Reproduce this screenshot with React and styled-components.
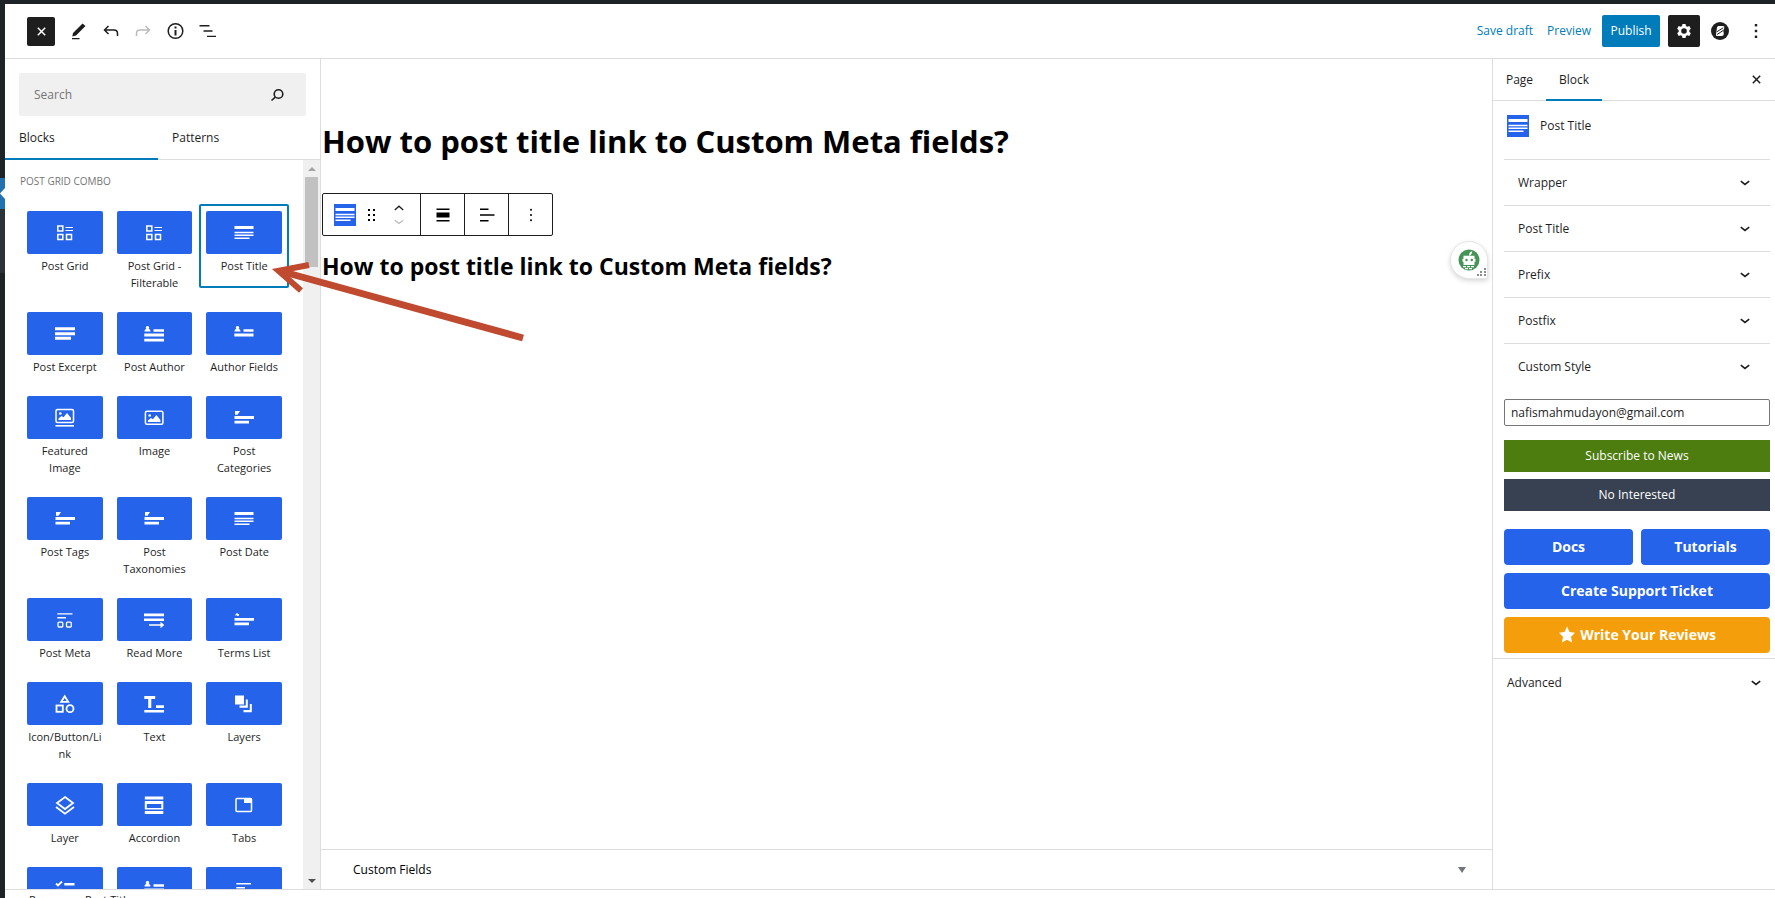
import React from "react";
import styled, { createGlobalStyle, css } from "styled-components";

const BLUE = "#2563eb";
const LINK = "#007cba";
const INK = "#1e1e1e";
const LINE = "#dddddd";

const GlobalStyle = createGlobalStyle`
  *, *::before, *::after { box-sizing: border-box; }
  body {
    margin: 0;
    background: #fff;
    color: ${INK};
    font: 12px/16px "Open Sans", "Noto Sans", sans-serif;
  }
  button, input { font: inherit; color: inherit; margin: 0; }
  button { border: 0; padding: 0; background: none; cursor: pointer; }
  svg { display: block; flex: none; }
`;

/* ---------- page frame ---------- */

const Page = styled.div`
  position: relative;
  display: grid;
  grid-template-columns: 5px minmax(0, 1fr);
  height: 100vh;
  overflow: hidden;
  border-top: 4px solid #1d2327;
`;

const AdminMenu = styled.nav`
  display: flex;
  flex-direction: column;
  padding-top: 174px;
  background: #1d2327;
`;

const AdminCurrent = styled.div`
  height: 31px;
  background: #2271b1;
  overflow: hidden;
`;

const AdminSubmenu = styled.div`
  height: 64px;
  background: #2c3338;
`;

const Editor = styled.div`
  display: flex;
  flex-direction: column;
  min-width: 0;
  min-height: 0;
`;

const Header = styled.header`
  display: flex;
  align-items: center;
  justify-content: space-between;
  flex: none;
  height: 55px;
  padding: 0 3px 0 20px;
  border-bottom: 1px solid ${LINE};
`;

const Tools = styled.div`
  display: flex;
  align-items: center;
`;

const ToolButton = styled.button`
  display: grid;
  place-items: center;
  width: 32px;
  height: 32px;
  color: ${(p) => (p.$muted ? "#bbbbbb" : INK)};
`;

const CloseInserter = styled(ToolButton)`
  width: 28px;
  height: 29px;
  margin: 0 8px 0 2px;
  border-radius: 2px;
  background: ${INK};
  color: #fff;
`;

const MoreButton = styled(ToolButton)`
  margin-left: 4px;
`;

const TextButton = styled.button`
  padding: 0 7px;
  height: 32px;
  color: ${LINK};
`;

const PublishButton = styled.button`
  height: 32px;
  width: 58px;
  margin: 0 8px 0 4px;
  border-radius: 2px;
  background: ${LINK};
  color: #fff;
`;

const SettingsButton = styled(ToolButton)`
  margin-right: 4px;
  border-radius: 2px;
  background: ${INK};
  color: #fff;
`;

const Body = styled.div`
  display: grid;
  grid-template-columns: 316px minmax(0, 1fr) 283px;
  flex: 1;
  min-height: 0;
`;

const Footer = styled.footer`
  display: flex;
  align-items: flex-start;
  gap: 10px;
  flex: none;
  height: 9px;
  padding: 3px 24px 0;
  border-top: 1px solid ${LINE};
  font-size: 11px;
  line-height: 14px;
`;

/* ---------- inserter ---------- */

const Inserter = styled.aside`
  display: flex;
  flex-direction: column;
  min-height: 0;
  border-right: 1px solid ${LINE};
`;

const SearchBox = styled.label`
  display: flex;
  align-items: center;
  height: 43px;
  margin: 14px 14px 0;
  padding: 1px 21px 0 15px;
  border-radius: 2px;
  background: #f0f0f0;
`;

const SearchInput = styled.input`
  flex: 1;
  min-width: 0;
  border: 0;
  outline: 0;
  background: none;
  padding: 0;
  &::placeholder { color: #757575; opacity: 1; }
`;

const Tabs = styled.div`
  display: flex;
  flex: none;
  height: 44px;
  border-bottom: 1px solid ${LINE};
`;

const InserterTab = styled.button`
  width: 153px;
  height: 44px;
  padding: 0 14px;
  text-align: left;
  ${(p) => p.$active && css`box-shadow: inset 0 -2px ${LINK};`}
`;

const ScrollArea = styled.div`
  display: flex;
  flex: 1;
  min-height: 0;
`;

const BlockList = styled.div`
  flex: 1;
  min-width: 0;
  padding: 13px 14px 0 15px;
  overflow: hidden;
`;

const GroupTitle = styled.h2`
  margin: 0 0 15px;
  font-size: 10px;
  font-weight: 500;
  line-height: 16px;
  color: #757575;
  text-transform: uppercase;
`;

const BlockGrid = styled.div`
  display: grid;
  grid-template-columns: repeat(3, minmax(0, 1fr));
  align-items: start;
`;

const BlockItem = styled.button`
  display: block;
  padding: 7px 7px 14px;
  border-radius: 2px;
  font-size: 11px;
  line-height: 17px;
  text-align: center;
  overflow-wrap: anywhere;
  ${(p) => p.$selected && css`box-shadow: inset 0 0 0 2px ${LINK};`}
`;

const BlockTile = styled.span`
  display: grid;
  place-items: center;
  height: 43px;
  margin-bottom: 3px;
  border-radius: 2px;
  background: ${BLUE};
  color: #fff;
`;

const ScrollTrack = styled.div`
  display: flex;
  flex-direction: column;
  align-items: center;
  width: 17px;
  padding: 7px 0 6px;
  background: #f0f0f0;
`;

const ScrollThumb = styled.div`
  width: 13px;
  height: 90px;
  margin: 6px 0 auto;
  background: #c1c1c1;
`;

/* ---------- canvas ---------- */

const Canvas = styled.main`
  display: flex;
  flex-direction: column;
  min-width: 0;
  color: #000;
`;

const Content = styled.div`
  flex: 1;
  padding: 62px 1px 0;
`;

const PostHeading = styled.h1`
  margin: 0 0 31px;
  font-size: 31px;
  line-height: 41px;
  font-weight: 700;
`;

const BlockToolbar = styled.div`
  display: inline-flex;
  height: 43px;
  border: 1px solid ${INK};
  border-radius: 2px;
`;

const ToolbarGroup = styled.div`
  display: flex;
  align-items: center;
  justify-content: center;
  width: 44px;
  & + & { border-left: 1px solid ${INK}; }
`;

const MoverGroup = styled(ToolbarGroup)`
  justify-content: flex-start;
  gap: 8px;
  width: 97px;
  padding-left: 11px;
`;

const BlockIcon = styled.span`
  display: grid;
  place-items: center;
  width: 22px;
  height: 22px;
  background: ${BLUE};
  color: #fff;
`;

const Movers = styled.div`
  display: flex;
  flex-direction: column;
  gap: 8px;
  margin-left: 6px;
`;

const BlockHeading = styled.h2`
  margin: 14px 0 0;
  font-size: 23px;
  line-height: 32px;
  font-weight: 700;
`;

const MetaBox = styled.button`
  display: flex;
  align-items: center;
  justify-content: space-between;
  height: 40px;
  padding: 0 26px 0 32px;
  border-top: 1px solid ${LINE};
  font-size: 12px;
`;

const Assistant = styled.button`
  position: absolute;
  top: 237px;
  right: 287px;
  display: grid;
  place-items: center;
  width: 38px;
  height: 38px;
  border: 1px solid #e6e6e8;
  border-radius: 19px 19px 2px 19px;
  background: #fff;
  box-shadow: 0 2px 5px rgba(0, 0, 0, 0.16);
`;

const PointerArrow = styled.svg`
  position: absolute;
  top: 250px;
  left: 268px;
  pointer-events: none;
`;

/* ---------- settings sidebar ---------- */

const Settings = styled.aside`
  border-left: 1px solid ${LINE};
`;

const SettingsTabs = styled.div`
  display: flex;
  align-items: stretch;
  height: 42px;
  padding-right: 3px;
  border-bottom: 1px solid ${LINE};
`;

const SettingsTab = styled.button`
  width: ${(p) => (p.$active ? 56 : 53)}px;
  height: 42px;
  ${(p) => p.$active && css`box-shadow: inset 0 -2px ${LINK};`}
`;

const CloseSettings = styled(ToolButton)`
  align-self: center;
  margin-left: auto;
`;

const BlockCard = styled.div`
  display: flex;
  align-items: center;
  gap: 11px;
  height: 50px;
  padding: 0 14px;
`;

const Panels = styled.div`
  display: flex;
  flex-direction: column;
  padding: 8px 5px 5px 11px;
`;

const PanelRow = styled.button`
  display: flex;
  align-items: center;
  justify-content: space-between;
  width: 100%;
  height: ${(p) => (p.$flush ? 48 : 46)}px;
  padding: ${(p) => (p.$flush ? "0 14px" : "1px 20px 0 14px")};
  border-top: 1px solid ${LINE};
`;

const EmailInput = styled.input`
  width: 100%;
  height: 27px;
  margin: 10px 0 14px;
  padding: 0 6px;
  border: 1px solid #767676;
  border-radius: 2px;
  background: #fff;
`;

const FlatButton = styled.button`
  height: 32px;
  margin-bottom: 7px;
  background: ${(p) => p.$bg};
  color: #fff;
`;

const Actions = styled.div`
  display: grid;
  grid-template-columns: 1fr 1fr;
  gap: 8px;
  margin-top: 11px;
`;

const ActionLink = styled.a`
  display: flex;
  align-items: center;
  justify-content: center;
  gap: 4px;
  grid-column: ${(p) => (p.$full ? "1 / -1" : "auto")};
  height: 36px;
  border-radius: 4px;
  background: ${(p) => (p.$warm ? "#f59e0b" : BLUE)};
  color: #fff;
  font-size: 14px;
  font-weight: 700;
  text-decoration: none;
`;

/* ---------- drawings ---------- */

const Glyph = ({ size = 20, box = 20, children }) => (
  <svg width={size} height={size} viewBox={`0 0 ${box} ${box}`} fill="currentColor" aria-hidden="true">
    {children}
  </svg>
);

const stroke = (w) => ({ fill: "none", stroke: "currentColor", strokeWidth: w });

const Person = () => <path d="M3.5 2a1.7 1.7 0 0 1 1 3.1c1.3.3 2 1 2 2.4h-6c0-1.4.7-2.1 2-2.4A1.7 1.7 0 0 1 3.5 2z" />;
const Picture = () => (
  <>
    <circle cx="5.3" cy="5.5" r="1.3" />
    <path d="M3.5 12v-1.5l3-2.5 2 1.2L12 5l4 5v2z" />
  </>
);

const glyphs = {
  grid: (
    <>
      <g {...stroke(1.5)}>
        <rect x="2.8" y="3" width="5" height="5" />
        <rect x="2.8" y="11.5" width="5" height="5" />
        <rect x="11.5" y="11.5" width="5" height="5" />
      </g>
      <path d="M10.500 4h7.500v1.100h-7.500zM10.500 7h7.500v1.100h-7.500z" />
    </>
  ),
  title: <path d="M.5 3h19v3H.5zM.5 8.800h19v1.400H.5zM.5 11.500h19v1.400H.5zM.5 14.500h15v1.400H.5z" />,
  excerpt: <path d="M0 3.200h20v3H0zM0 8.200h20v3H0zM0 12.800h16v3H0z" />,
  author: (
    <>
      <Person />
      <path d="M9.500 5.200H20v2.500H9.500zM.3 9.500H20v3H.3zM.3 14.700H20v2.700H.3z" />
    </>
  ),
  fields: (
    <>
      <Person />
      <path d="M9.500 5.200h10v2.500h-10zM.3 9.500h19.200v3H.3z" />
    </>
  ),
  featured: (
    <>
      <rect x="1" y="1.500" width="17.500" height="13" rx="1.500" {...stroke(1.5)} />
      <Picture />
      <path d="M.5 17H19v1.600H.5z" />
    </>
  ),
  image: (
    <g transform="translate(.4 2)">
      <rect x="1" y="1.200" width="17.500" height="13" rx="1.500" {...stroke(1.5)} />
      <Picture />
    </g>
  ),
  tag: (
    <>
      <path d="M1 3h5L3.500 6.800H1z" />
      <path d="M.5 8H20v3H.5zM.5 12.700H15v2.800H.5z" />
    </>
  ),
  terms: (
    <>
      <path d="M2.800 3l2.500 1.500L4.500 6H3v-.8L.8 5.500z" />
      <path d="M.5 8H20v2.800H.5zM.5 12.500H15v2.800H.5z" />
    </>
  ),
  meta: (
    <>
      <path d="M2.300 3.200h15.200v1.300H2.300zM2.300 7H11v1.400H2.300z" />
      <rect x="3" y="12.200" width="4.800" height="4.800" rx="1" {...stroke(1.3)} />
      <rect x="11.500" y="12.200" width="4.800" height="4.800" rx="1" {...stroke(1.3)} />
    </>
  ),
  more: <path d="M0 3.500h20v2.700H0zM0 8.400h20v2.700H0zM5 14.200h11.500v-2.400l3.700 3.200-3.700 3.200v-2.400H5z" />,
  shapes: (
    <g {...stroke(1.8)}>
      <path d="M9.700 2.200l3.500 5.600H6.200z" />
      <rect x="1.500" y="11.500" width="6.300" height="6.300" />
      <circle cx="15" cy="14.700" r="3.500" />
    </g>
  ),
  text: <path d="M.3 2h10.900v3H7.300v9H4.200V5H.3zM12 11.300h8V14h-8zM.3 16H20v2.600H.3z" />,
  layers: <path d="M1 1.500h9v9H1zM11.800 5.500h2v8.300H5.500v-2.300h6.300zM15.800 10h2v8.300H9.500V16h6.300z" />,
  layer: <path d="M10 2l8 6-8 6-8-6zM1 12l9 6.700 9-6.700" {...stroke(1.8)} />,
  accordion: (
    <>
      <path d="M.8 1.500h18.500v3H.8zM.8 16h18.500v3H.8z" />
      <path d="M.8 6h18.500v8.500H.8zm2 3v4h14.500V9z" fillRule="evenodd" />
    </>
  ),
  tabs: (
    <>
      <rect x="2" y="3.500" width="15.500" height="13" rx="1" {...stroke(1.5)} />
      <path d="M10 3h8v5h-8z" />
    </>
  ),
  checks: (
    <>
      <path d="M1 4.500l2 2 4-4" {...stroke(1.8)} />
      <path d="M9.300 4h10.200v2.500H9.300zM9.300 12h10.200v2.500H9.300z" />
      <rect x="2.200" y="10.500" width="4" height="4" {...stroke(1.3)} />
    </>
  ),
  lines: <path d="M2.300 4H17v1.400H2.300zM2.300 8H11v1.400H2.300zM2.300 12H17v1.400H2.300z" />,
};

const Chevron = ({ up, color = INK, thin }) => (
  <svg width="10" height="6" viewBox="0 0 10 6" aria-hidden="true">
    <path
      d={up ? "M.8 5L5 1.200 9.200 5" : "M.8 1.200L5 4.500 9.200 1.200"}
      fill="none"
      stroke={color}
      strokeWidth={thin ? 1.3 : 1.6}
    />
  </svg>
);

const Cross = () => (
  <svg width="9" height="9" viewBox="0 0 9 9" aria-hidden="true">
    <path d="M.8.8l7.400 7.400M8.200.8L.8 8.200" stroke="currentColor" strokeWidth="1.500" />
  </svg>
);

const VerticalDots = ({ size = 16, r = 1.2 }) => (
  <Glyph size={size} box={16}>
    <rect x={8 - r} y="1" width={2 * r} height={2 * r} />
    <rect x={8 - r} y={8 - r} width={2 * r} height={2 * r} />
    <rect x={8 - r} y={15 - 2 * r} width={2 * r} height={2 * r} />
  </Glyph>
);

const Triangle = ({ up, color, height = 4 }) => (
  <svg width="8" height={height} viewBox="0 0 8 4" preserveAspectRatio="none" aria-hidden="true">
    <path d={up ? "M0 4L4 0l4 4z" : "M0 0h8L4 4z"} fill={color} />
  </svg>
);

const TitleIcon = () => (
  <BlockIcon>
    <Glyph>{glyphs.title}</Glyph>
  </BlockIcon>
);

const RobotIcon = () => (
  <svg width="34" height="34" viewBox="0 0 34 34" aria-hidden="true">
    <circle cx="17" cy="17" r="10.500" fill="#459457" />
    <path d="M17.200 12.500c-.2-2.500.8-4 3-4.300-.1 2.200-1 3.500-2.300 4.300zM11.500 12.800h11v3h1v3h-1V22h-11v-3.200h-1v-3h1z" fill="#fff" />
    <circle cx="14.500" cy="17" r="1.200" fill="#459457" />
    <circle cx="19.800" cy="17" r="1.200" fill="#459457" />
    <path d="M11 23.700h12M13 25.700h8" stroke="#fff" strokeWidth="1.200" strokeDasharray="3 1" />
    <g fill="#8c8c8c">
      {[[32, 25], [32, 28], [32, 31], [28, 28], [28, 31], [25, 31]].map(([x, y]) => (
        <rect key={`${x}-${y}`} x={x} y={y} width="2" height="2" />
      ))}
    </g>
  </svg>
);

/* ---------- data ---------- */

const blocks = [
  ["Post Grid", "grid"],
  ["Post Grid - Filterable", "grid"],
  ["Post Title", "title"],
  ["Post Excerpt", "excerpt"],
  ["Post Author", "author"],
  ["Author Fields", "fields"],
  ["Featured Image", "featured"],
  ["Image", "image"],
  ["Post Categories", "tag"],
  ["Post Tags", "tag"],
  ["Post Taxonomies", "tag"],
  ["Post Date", "title"],
  ["Post Meta", "meta"],
  ["Read More", "more"],
  ["Terms List", "terms"],
  ["Icon/Button/Link", "shapes"],
  ["Text", "text"],
  ["Layers", "layers"],
  ["Layer", "layer"],
  ["Accordion", "accordion"],
  ["Tabs", "tabs"],
  ["", "checks"],
  ["", "author"],
  ["", "lines"],
];

const panels = ["Wrapper", "Post Title", "Prefix", "Postfix", "Custom Style"];

const heading = "How to post title link to Custom Meta fields?";

/* ---------- sections ---------- */

function TopBar() {
  return (
    <Header>
      <Tools>
        <CloseInserter aria-label="Close block inserter"><Cross /></CloseInserter>
        <ToolButton aria-label="Tools">
          <Glyph size={18} box={18}>
            <path d="M3 11l9.500-9.500 3 2.500L6 13.500 2.300 14.500zM2 16h7.500v1.300H2z" />
          </Glyph>
        </ToolButton>
        <ToolButton aria-label="Undo">
          <Glyph size={18} box={18}>
            <path d="M6.500 4L2.500 8l4 4M2.500 8H12q3.500 0 3.500 3.500v2.500" {...stroke(1.5)} />
          </Glyph>
        </ToolButton>
        <ToolButton aria-label="Redo" $muted>
          <Glyph size={18} box={18}>
            <path d="M11.500 4l4 4-4 4M15.500 8H6Q2.500 8 2.500 11.500v2.500" {...stroke(1.5)} />
          </Glyph>
        </ToolButton>
        <ToolButton aria-label="Details">
          <Glyph size={18} box={18}>
            <circle cx="9.500" cy="9" r="7.300" {...stroke(1.5)} />
            <path d="M8.500 4.500h2v2h-2zM8.500 8h2v5.500h-2z" />
          </Glyph>
        </ToolButton>
        <ToolButton aria-label="List view">
          <Glyph size={18} box={18}>
            <path d="M1.500 3h10v1.400h-10zM5.500 8.300h9v1.400h-9zM9 13.700h9v1.400H9z" />
          </Glyph>
        </ToolButton>
      </Tools>
      <Tools>
        <TextButton>Save draft</TextButton>
        <TextButton>Preview</TextButton>
        <PublishButton>Publish</PublishButton>
        <SettingsButton aria-label="Settings">
          <Glyph size={16} box={16}>
            <path
              fillRule="evenodd"
              d="M6.500 1h3l.5 2 1.300.7 2-.6 1.500 2.600-1.500 1.500v1.600l1.500 1.500-1.500 2.600-2-.6-1.300.7-.5 2h-3L6 13l-1.300-.7-2 .6-1.500-2.600 1.500-1.500V7.200L1.200 5.700l1.500-2.600 2 .6L6 3zM8 5.200a2.800 2.800 0 1 0 0 5.600 2.800 2.800 0 0 0 0-5.600z"
            />
          </Glyph>
        </SettingsButton>
        <ToolButton aria-label="Post Grid Combo">
          <Glyph size={18} box={18}>
            <circle cx="9" cy="9" r="9" />
            <path d="M7.500 4H12q1.800 0 1.300 2l-1 3 .5 2.500q0 2.500-2.500 2.500H6q-1.300 0-1-1.500L6 5.500Q6.300 4 7.500 4z" fill="#fff" />
            <path d="M12.200 5.800L5.800 9.800M12.500 8.200L6 12.600" stroke={INK} strokeWidth="1" />
          </Glyph>
        </ToolButton>
        <MoreButton aria-label="Options"><VerticalDots /></MoreButton>
      </Tools>
    </Header>
  );
}

function BlockInserter() {
  return (
    <Inserter>
      <SearchBox>
        <SearchInput type="search" placeholder="Search" aria-label="Search for blocks" />
        <Glyph size={16} box={16}>
          <circle cx="9.500" cy="7" r="4.300" {...stroke(1.6)} />
          <path d="M6.300 10.200L2.500 13.500" {...stroke(1.6)} />
        </Glyph>
      </SearchBox>
      <Tabs role="tablist">
        <InserterTab role="tab" aria-selected="true" $active>Blocks</InserterTab>
        <InserterTab role="tab" aria-selected="false">Patterns</InserterTab>
      </Tabs>
      <ScrollArea>
        <BlockList>
          <GroupTitle>Post Grid Combo</GroupTitle>
          <BlockGrid>
            {blocks.map(([name, glyph], i) => (
              <BlockItem key={i} $selected={name === "Post Title"}>
                <BlockTile><Glyph>{glyphs[glyph]}</Glyph></BlockTile>
                {name}
              </BlockItem>
            ))}
          </BlockGrid>
        </BlockList>
        <ScrollTrack>
          <Triangle up color="#a3a3a3" />
          <ScrollThumb />
          <Triangle color="#505050" />
        </ScrollTrack>
      </ScrollArea>
    </Inserter>
  );
}

function EditorCanvas() {
  return (
    <Canvas>
      <Content>
        <PostHeading>{heading}</PostHeading>
        <BlockToolbar role="toolbar">
          <MoverGroup>
            <TitleIcon />
            <Glyph size={16} box={16}>
              {[4, 9].map((x) => [2, 7, 12].map((y) => <rect key={`${x}-${y}`} x={x} y={y} width="2" height="2" />))}
            </Glyph>
            <Movers>
              <Chevron up thin />
              <Chevron color="#bbbbbb" thin />
            </Movers>
          </MoverGroup>
          <ToolbarGroup>
            <Glyph size={16} box={16}>
              <path d="M1.500 1.500h13V3h-13zM1.500 5.500h13v5h-13zM1.500 13h13v1.500h-13z" />
            </Glyph>
          </ToolbarGroup>
          <ToolbarGroup>
            <Glyph size={16} box={16}>
              <path d="M1 1.500h8.500V3H1zM1 7.300h14.500v1.500H1zM1 13h8.500v1.500H1z" />
            </Glyph>
          </ToolbarGroup>
          <ToolbarGroup>
            <VerticalDots size={14} r={1} />
          </ToolbarGroup>
        </BlockToolbar>
        <BlockHeading>{heading}</BlockHeading>
      </Content>
      <MetaBox>
        Custom Fields
        <Triangle color="#72777c" height={6} />
      </MetaBox>
    </Canvas>
  );
}

function SettingsSidebar() {
  return (
    <Settings>
      <SettingsTabs>
        <SettingsTab>Page</SettingsTab>
        <SettingsTab $active>Block</SettingsTab>
        <CloseSettings aria-label="Close settings"><Cross /></CloseSettings>
      </SettingsTabs>
      <BlockCard>
        <TitleIcon />
        Post Title
      </BlockCard>
      <Panels>
        {panels.map((name) => (
          <PanelRow key={name}>
            {name}
            <Chevron />
          </PanelRow>
        ))}
        <EmailInput type="email" aria-label="Email" defaultValue="nafismahmudayon@gmail.com" />
        <FlatButton $bg="#4d7c0f">Subscribe to News</FlatButton>
        <FlatButton $bg="#374151">No Interested</FlatButton>
        <Actions>
          <ActionLink href="#docs">Docs</ActionLink>
          <ActionLink href="#tutorials">Tutorials</ActionLink>
          <ActionLink href="#support" $full>Create Support Ticket</ActionLink>
          <ActionLink href="#reviews" $full $warm>
            <Glyph size={18} box={18}>
              <path d="M9 .5l2.500 5.500 5.500.8-4 4 1 5.600-5-2.700-5 2.700 1-5.600-4-4 5.500-.8z" />
            </Glyph>
            Write Your Reviews
          </ActionLink>
        </Actions>
      </Panels>
      <PanelRow $flush>
        Advanced
        <Chevron />
      </PanelRow>
    </Settings>
  );
}

export default function App() {
  return (
    <Page>
      <GlobalStyle />
      <AdminMenu aria-label="Admin menu">
        <AdminCurrent>
          <svg width="5" height="31" viewBox="0 0 5 31" aria-hidden="true">
            <path d="M5 10v11L0 15.500z" fill="#fff" />
          </svg>
        </AdminCurrent>
        <AdminSubmenu />
      </AdminMenu>
      <Editor>
        <TopBar />
        <Body>
          <BlockInserter />
          <EditorCanvas />
          <SettingsSidebar />
        </Body>
        <Footer>
          <button>Page</button>
          <span>→</span>
          <button>Post Title</button>
        </Footer>
      </Editor>
      <Assistant aria-label="Writing assistant"><RobotIcon /></Assistant>
      <PointerArrow width="260" height="100" viewBox="0 0 260 100" aria-hidden="true">
        <path d="M255 84L12 17" stroke="#bf4a30" strokeWidth="7" />
        <path d="M41 11L10.500 16.700 33 36.500" fill="none" stroke="#bf4a30" strokeWidth="6" strokeMiterlimit="10" />
      </PointerArrow>
    </Page>
  );
}
